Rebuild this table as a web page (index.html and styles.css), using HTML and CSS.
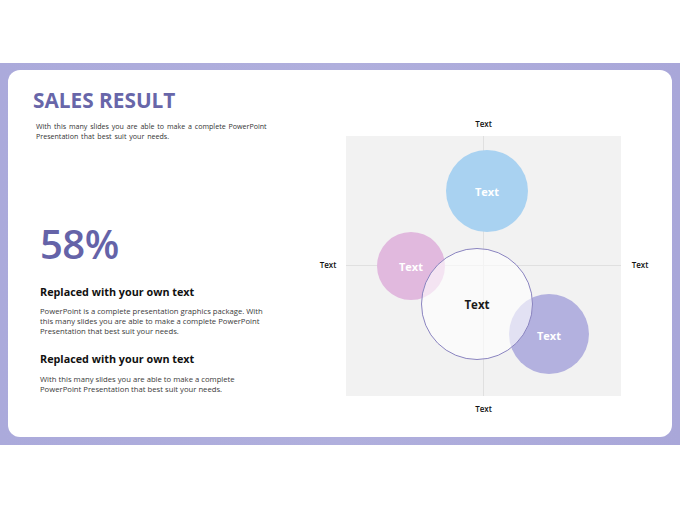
FILE: index.html
```html
<!DOCTYPE html>
<html>
<head>
<meta charset="utf-8">
<link rel="stylesheet" href="styles.css">
</head>
<body>
<div class="frame">
  <div class="card">
    <div class="left">
      <h1 class="title">SALES RESULT</h1>
      <p class="sub">With this many slides you are able to make a complete PowerPoint<br>Presentation that best suit your needs.</p>
      <div class="big">58%</div>
      <h2 class="head">Replaced with your own text</h2>
      <p class="body">PowerPoint is a complete presentation graphics package. With<br>this many slides you are able to make a complete PowerPoint<br>Presentation that best suit your needs.</p>
      <h2 class="head head2">Replaced with your own text</h2>
      <p class="body">With this many slides you are able to make a complete<br>PowerPoint Presentation that best suit your needs.</p>
    </div>
    <div class="chart">
      <div class="lbl lbl-top">Text</div>
      <div class="lbl lbl-left">Text</div>
      <div class="box">
        <div class="vline"></div>
        <div class="hline"></div>
        <div class="c c-blue">Text</div>
        <div class="c c-pink">Text</div>
        <div class="c c-purple">Text</div>
        <div class="c c-white">Text</div>
      </div>
      <div class="lbl lbl-right">Text</div>
      <div class="lbl lbl-bottom">Text</div>
    </div>
  </div>
</div>
</body>
</html>
```
FILE: styles.css
```css
html, body {
  margin: 0;
  padding: 0;
  background: #ffffff;
  width: 680px;
  height: 510px;
  overflow: hidden;
  font-family: "Open Sans", "Noto Sans", sans-serif;
}
.frame {
  margin-top: 63px;
  height: 382px;
  box-sizing: border-box;
  padding: 7px 8px 8px 8px;
  background: linear-gradient(90deg, #abaadb 0%, #b0afdd 50%, #a9a7d9 100%);
}
.card {
  height: 367px;
  background: #ffffff;
  border-radius: 12px;
  display: flex;
  box-sizing: border-box;
}
.left {
  width: 290px;
  padding-left: 25px;
  box-sizing: border-box;
}
.title {
  margin: 15px 0 0 0;
  font-size: 20.8px;
  line-height: 30px;
  font-weight: 700;
  color: #6866a9;
  letter-spacing: 0;
}
.sub {
  margin: 6px 0 0 3px;
  font-size: 7.1px;
  line-height: 10px;
  color: #333333;
  word-spacing: 1px;
}
.big {
  margin: 80px 0 0 7px;
  font-size: 40px;
  line-height: 46px;
  font-weight: 600;
  color: #6563a8;
  letter-spacing: -0.5px;
}
.head {
  margin: 17px 0 0 7px;
  font-size: 10.8px;
  line-height: 16px;
  font-weight: 700;
  color: #111111;
}
.head2 {
  margin-top: 15px;
}
.body {
  margin: 6px 0 0 7px;
  font-size: 7.7px;
  line-height: 10px;
  color: #3a3a3a;
}
.head2 + .body {
  margin-top: 7px;
}
.chart {
  margin-left: 12px;
  margin-top: 48px;
  display: grid;
  grid-template-columns: 36px 275px 38px;
  grid-template-rows: 18px 260px 18px;
  align-items: center;
  justify-items: center;
}
.lbl {
  font-size: 8px;
  font-weight: 600;
  color: #111111;
}
.lbl-top { grid-column: 2; grid-row: 1; align-self: start; }
.lbl-left { grid-column: 1; grid-row: 2; margin-top: -3px; }
.lbl-right { grid-column: 3; grid-row: 2; margin-top: -3px; }
.lbl-bottom { grid-column: 2; grid-row: 3; align-self: end; }
.box {
  grid-column: 2;
  grid-row: 2;
  position: relative;
  width: 275px;
  height: 260px;
  background: #f2f2f2;
}
.vline {
  position: absolute;
  left: 137px;
  top: 0;
  width: 1px;
  height: 100%;
  background: #e0e0e0;
}
.hline {
  position: absolute;
  top: 129px;
  left: 0;
  height: 1px;
  width: 100%;
  background: #e0e0e0;
}
.c {
  position: absolute;
  border-radius: 50%;
  display: flex;
  align-items: center;
  justify-content: center;
  font-size: 11px;
  font-weight: 700;
  color: #ffffff;
  box-sizing: border-box;
}
.c-blue {
  left: 100px; top: 14px; width: 82px; height: 82px;
  background: #a9d2f1;
}
.c-pink {
  left: 31px; top: 96px; width: 68px; height: 68px;
  background: #e1b9de;
}
.c-purple {
  left: 163px; top: 158px; width: 80px; height: 80px;
  background: #b3b1df;
  padding-top: 2px;
}
.c-white {
  left: 75px; top: 112px; width: 112px; height: 112px;
  background: rgba(255, 255, 255, 0.62);
  border: 1px solid #8a84c0;
  color: #1a1a1a;
  font-size: 11.5px;
}
```
